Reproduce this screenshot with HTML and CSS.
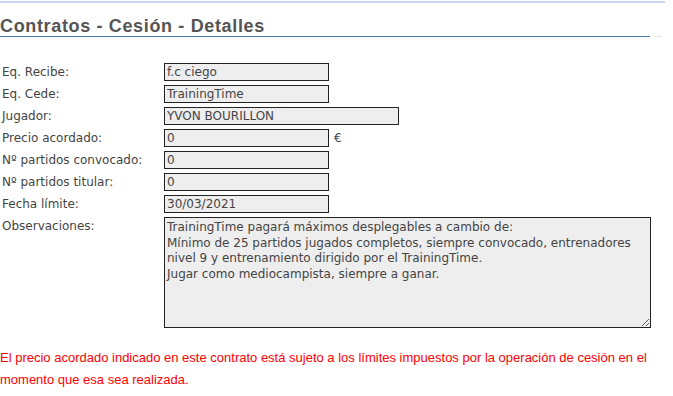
FILE: index.html
```html
<!DOCTYPE html>
<html lang="es">
<head>
    <meta charset="UTF-8">
    <title>Contratos - Cesión - Detalles</title>
    <link rel="stylesheet" href="styles.css">
</head>
<body>
    <div class="page">
        <div class="topline"></div>

        <div class="title-row">
            <div class="title-bar">
                <h2>Contratos - Cesión - Detalles</h2>
            </div>
            <span class="title-tail"></span>
        </div>

        <table class="details">
            <tr>
                <td class="lbl">Eq. Recibe:</td>
                <td><input type="text" class="field" value="f.c ciego" readonly></td>
            </tr>
            <tr>
                <td class="lbl">Eq. Cede:</td>
                <td><input type="text" class="field" value="TrainingTime" readonly></td>
            </tr>
            <tr>
                <td class="lbl">Jugador:</td>
                <td><input type="text" class="field wide" value="YVON BOURILLON" readonly></td>
            </tr>
            <tr>
                <td class="lbl">Precio acordado:</td>
                <td><input type="text" class="field" value="0" readonly><span class="unit">€</span></td>
            </tr>
            <tr>
                <td class="lbl">Nº partidos convocado:</td>
                <td><input type="text" class="field" value="0" readonly></td>
            </tr>
            <tr>
                <td class="lbl">Nº partidos titular:</td>
                <td><input type="text" class="field" value="0" readonly></td>
            </tr>
            <tr>
                <td class="lbl">Fecha límite:</td>
                <td><input type="text" class="field" value="30/03/2021" readonly></td>
            </tr>
            <tr>
                <td class="lbl top">Observaciones:</td>
                <td><textarea class="notes" readonly>TrainingTime pagará máximos desplegables a cambio de:
Mínimo de 25 partidos jugados completos, siempre convocado, entrenadores nivel 9 y entrenamiento dirigido por el TrainingTime.
Jugar como mediocampista, siempre a ganar.</textarea></td>
            </tr>
        </table>

        <p class="warning">El precio acordado indicado en este contrato está sujeto a los límites impuestos por la operación de cesión en el momento que esa sea realizada.</p>
    </div>
</body>
</html>
```

FILE: styles.css
```css
body {
    margin: 0;
    background-color: #fff;
    font-family: 'DejaVu Sans', Verdana, sans-serif;
    font-size: 12px;
    color: #444;
}

.page {
    width: 665px;
}

.topline {
    height: 2px;
    margin-top: 1px;
    background-color: #c6d6ea;
}

.title-row {
    display: flex;
    align-items: flex-end;
}

.title-bar {
    width: 650px;
    border-bottom: 1px solid #4a7cae;
    padding-top: 13px;
}

.title-tail {
    width: 7px;
    margin-left: 5px;
    border-bottom: 1px solid #e2e2e2;
}

h2 {
    margin: 0;
    font-family: 'Liberation Sans', Arial, sans-serif;
    font-size: 18px;
    font-weight: bold;
    color: #555;
    line-height: 20px;
    letter-spacing: 0.65px;
}

.details {
    border-collapse: collapse;
    margin-top: 26px;
}

.details td {
    padding: 0 0 4px 0;
    vertical-align: middle;
}

.lbl {
    width: 162px;
    padding-left: 2px !important;
    white-space: nowrap;
}

.lbl.top {
    vertical-align: top !important;
    padding-top: 2px !important;
}

.field {
    box-sizing: border-box;
    width: 165px;
    height: 18px;
    margin: 0;
    padding: 0 2px;
    border: 1px solid #222;
    background-color: #eee;
    font-family: 'DejaVu Sans', Verdana, sans-serif;
    font-size: 12px;
    color: #444;
    vertical-align: middle;
}

.field.wide {
    width: 235px;
}

.unit {
    margin-left: 5px;
    vertical-align: middle;
}

.notes {
    box-sizing: border-box;
    display: block;
    width: 487px;
    height: 111px;
    margin: 0;
    padding: 2px 2px;
    border: 1px solid #222;
    background-color: #eee;
    font-family: 'DejaVu Sans', Verdana, sans-serif;
    font-size: 12px;
    line-height: 15.5px;
    color: #444;
}

.warning {
    margin: 15px 0 0 0;
    width: 660px;
    font-family: 'Liberation Sans', Arial, sans-serif;
    font-size: 13px;
    line-height: 22px;
    color: #f00;
}
```
